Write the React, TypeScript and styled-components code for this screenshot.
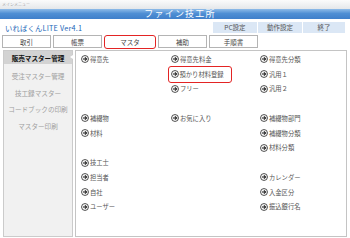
import styled, { createGlobalStyle } from 'styled-components';

const GlobalStyle = createGlobalStyle`
  body {
    margin: 0;
    background: #ffffff;
    font-family: 'Noto Sans CJK JP', 'Noto Sans', sans-serif;
  }
`;

const Window = styled.div`
  width: 350px;
  height: 238px;
  overflow: hidden;
  display: flex;
  flex-direction: column;
  background: #ffffff;
`;

const TitleBar = styled.div`
  height: 9px;
  background: linear-gradient(#fbfbfb, #e4e7ea);
  font-size: 4px;
  line-height: 9px;
  color: #a4a4a4;
  padding-left: 2px;
`;

const Header = styled.div`
  height: 10px;
  background: linear-gradient(#8ebbe8, #4f8fd4 45%, #3f7fca);
  color: #ffffff;
  font-size: 9px;
  line-height: 10px;
  letter-spacing: 1.2px;
  text-align: center;
  padding-left: 10px;
`;

const InfoRow = styled.div`
  height: 15px;
  display: flex;
  align-items: center;
  justify-content: space-between;
  padding: 2px 5px 0 5px;
  box-sizing: border-box;
`;

const AppName = styled.div`
  color: #2266b8;
  font-size: 7.3px;
  letter-spacing: 0.2px;
`;

const ButtonGroup = styled.div`
  display: flex;
  gap: 1px;
`;

const TopButton = styled.div<{ $w: number }>`
  width: ${({ $w }) => $w}px;
  height: 11px;
  background: #dbe7f5;
  color: #555;
  font-size: 6.5px;
  line-height: 11px;
  text-align: center;
`;

const TabRow = styled.div`
  height: 15px;
  display: flex;
  align-items: center;
  gap: 2px;
  padding-left: 2px;
`;

const Tab = styled.div<{ $active?: boolean }>`
  width: ${({ $active }) => ($active ? 50 : 47)}px;
  height: ${({ $active }) => ($active ? 12 : 11)}px;
  border: ${({ $active }) => ($active ? '1.5px solid #e32424' : '1px solid #b4b4b4')};
  border-radius: ${({ $active }) => ($active ? 3 : 0)}px;
  background: #ffffff;
  color: #444;
  font-size: 6.5px;
  display: flex;
  align-items: center;
  justify-content: center;
`;

const Main = styled.div`
  flex: 1;
  display: flex;
  gap: 2px;
  padding: 1px 3px 1px 3px;
  min-height: 0;
`;

const Sidebar = styled.div`
  width: 70px;
  box-sizing: border-box;
  background: #f1f1f1;
  border: 1px solid #cbcbcb;
  display: flex;
  flex-direction: column;
`;

const SideItem = styled.div<{ $active?: boolean }>`
  position: relative;
  height: ${({ $active }) => ($active ? 13 : 16.5)}px;
  margin-bottom: ${({ $active }) => ($active ? 4 : 0)}px;
  background: ${({ $active }) => ($active ? '#d3d3d3' : 'transparent')};
  color: ${({ $active }) => ($active ? '#111' : '#a0a0a0')};
  font-weight: ${({ $active }) => ($active ? 700 : 400)};
  font-size: 6.6px;
  display: flex;
  align-items: center;
  justify-content: center;
  white-space: nowrap;

  ${({ $active }) =>
    $active &&
    `
    &::after {
      content: '';
      position: absolute;
      right: -1px;
      top: 4px;
      border-top: 2.5px solid transparent;
      border-bottom: 2.5px solid transparent;
      border-right: 3px solid #ffffff;
    }
  `}
`;

const Content = styled.div`
  flex: 1;
  box-sizing: border-box;
  border: 1px solid #c4c4c4;
  background: #ffffff;
  display: grid;
  grid-template-columns: 90px 89px 1fr;
  grid-auto-rows: 14.75px;
  padding: 1px 0 0 5px;
`;

const Item = styled.div<{ $row: number; $col: number; $highlight?: boolean }>`
  grid-row: ${({ $row }) => $row + 1};
  grid-column: ${({ $col }) => $col + 1};
  display: flex;
  align-items: center;
  gap: 1px;
  font-size: 6.3px;
  color: #555;
  white-space: nowrap;
  align-self: center;
  justify-self: start;
  ${({ $highlight }) =>
    $highlight &&
    `
    border: 1.5px solid #e32424;
    border-radius: 3px;
    padding: 3px 7px 3px 1.5px;
    margin-left: -3px;
  `}
`;

const ArrowIcon = () => (
  <svg width="8" height="8" viewBox="0 0 10 10">
    <circle cx="5" cy="5" r="4.3" fill="#fff" stroke="#222" strokeWidth="1" />
    <path d="M2.5 5 H6.6" stroke="#222" strokeWidth="1.4" />
    <path d="M4.9 3 L7 5 L4.9 7" fill="none" stroke="#222" strokeWidth="1.4" />
  </svg>
);

const tabs = ['取引', '帳票', 'マスタ', '補助', '手順書'];

const sideItems = ['販売マスター管理', '受注マスター管理', '技工録マスター', 'コードブックの印刷', 'マスター印刷'];

const items: { label: string; row: number; col: number; highlight?: boolean }[] = [
  { label: '得意先', row: 0, col: 0 },
  { label: '補綴物', row: 4, col: 0 },
  { label: '材料', row: 5, col: 0 },
  { label: '技工士', row: 7, col: 0 },
  { label: '担当者', row: 8, col: 0 },
  { label: '自社', row: 9, col: 0 },
  { label: 'ユーザー', row: 10, col: 0 },
  { label: '得意先料金', row: 0, col: 1 },
  { label: '預かり材料登録', row: 1, col: 1, highlight: true },
  { label: 'フリー', row: 2, col: 1 },
  { label: 'お気に入り', row: 4, col: 1 },
  { label: '得意先分類', row: 0, col: 2 },
  { label: '汎用１', row: 1, col: 2 },
  { label: '汎用２', row: 2, col: 2 },
  { label: '補綴物部門', row: 4, col: 2 },
  { label: '補綴物分類', row: 5, col: 2 },
  { label: '材料分類', row: 6, col: 2 },
  { label: 'カレンダー', row: 8, col: 2 },
  { label: '入金区分', row: 9, col: 2 },
  { label: '振込銀行名', row: 10, col: 2 },
];

export default function App() {
  return (
    <Window>
      <GlobalStyle />
      <TitleBar>メインメニュー</TitleBar>
      <Header>ファイン技工所</Header>
      <InfoRow>
        <AppName>いればくんLITE Ver4.1</AppName>
        <ButtonGroup>
          <TopButton $w={44}>PC設定</TopButton>
          <TopButton $w={44}>動作設定</TopButton>
          <TopButton $w={42}>終了</TopButton>
        </ButtonGroup>
      </InfoRow>
      <TabRow>
        {tabs.map((t) => (
          <Tab key={t} $active={t === 'マスタ'}>
            {t}
          </Tab>
        ))}
      </TabRow>
      <Main>
        <Sidebar>
          {sideItems.map((s, i) => (
            <SideItem key={s} $active={i === 0}>
              {s}
            </SideItem>
          ))}
        </Sidebar>
        <Content>
          {items.map((it) => (
            <Item key={it.label} $row={it.row} $col={it.col} $highlight={it.highlight}>
              <ArrowIcon />
              {it.label}
            </Item>
          ))}
        </Content>
      </Main>
    </Window>
  );
}
